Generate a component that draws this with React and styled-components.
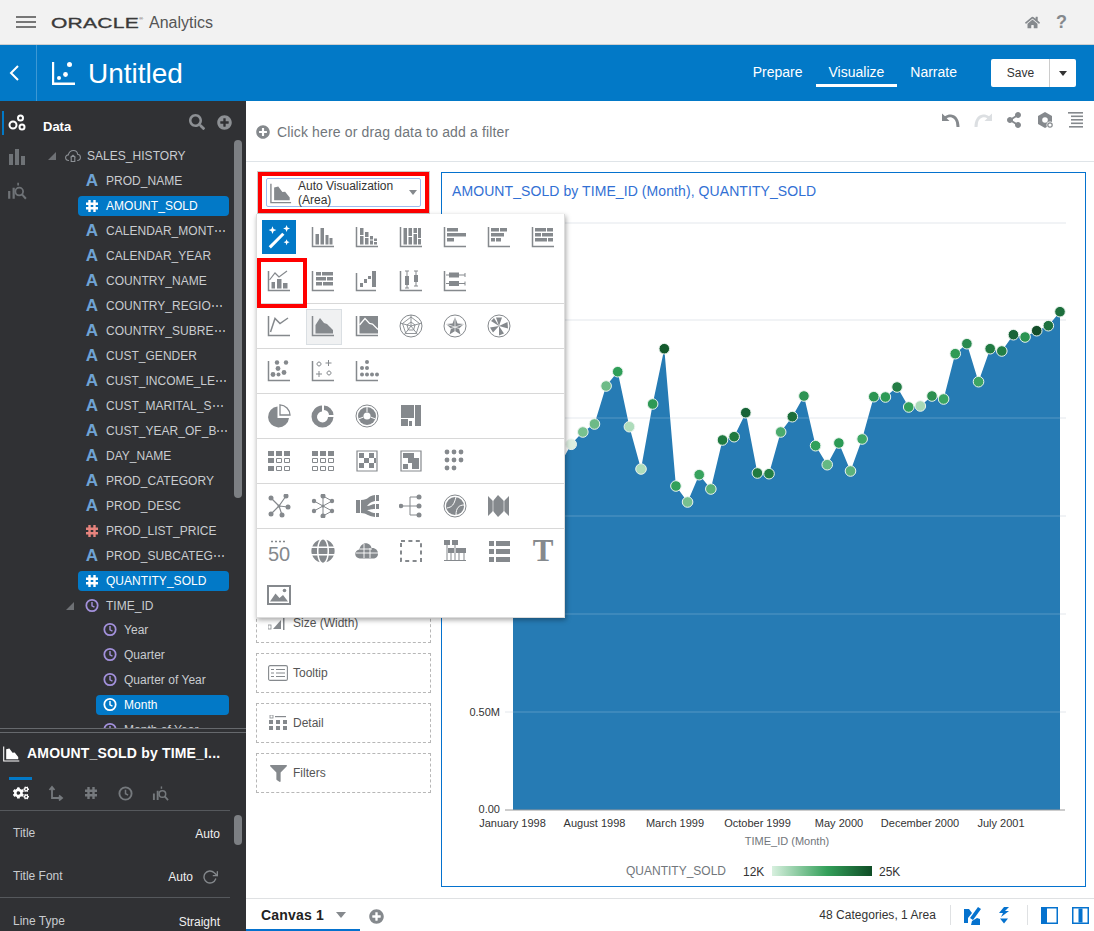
import React from 'react';
import styled, { createGlobalStyle } from 'styled-components';
import { FaHome, FaSearch, FaPlusCircle, FaShareAlt, FaFilter, FaCogs, FaGlobe } from 'react-icons/fa';
import { FiRotateCw } from 'react-icons/fi';

const Global = createGlobalStyle`
  html, body { margin: 0; padding: 0; background: #fff; overflow: hidden; }
  body { font-family: "Liberation Sans", Arial, sans-serif; }
  * { box-sizing: border-box; }
`;

const G = '#85898d';

const Page = styled.div`display: flex; flex-direction: column; width: 1094px; height: 931px; overflow: hidden;`;

/* ---------- top bars ---------- */
const TopBar = styled.header`
  height: 45px; flex: none; display: flex; align-items: center; padding: 0 27px 0 16px;
  background: #f2f2f2; border-bottom: 1px solid #cfcfcf;
`;
const Burger = styled.span`
  width: 20px; height: 12px; margin-right: 15px; display: block;
  border-top: 2px solid #777; border-bottom: 2px solid #777; position: relative;
  &::after { content: ''; position: absolute; left: 0; right: 0; top: 3px; height: 2px; background: #777; }
`;
const Logo = styled.span`
  font-size: 15px; letter-spacing: .2px; color: #3a3a3a; -webkit-text-stroke: .35px #3a3a3a;
  display: inline-block; width: 92px; transform: scaleX(1.4); transform-origin: left center; white-space: nowrap;
  sup { font-size: 4px; -webkit-text-stroke: 0; vertical-align: 8px; }
`;
const Product = styled.span`font-size: 16px; color: #555; margin-left: 6px; margin-top: 1px;`;
const TopIcons = styled.div`margin-left: auto; display: flex; align-items: center; gap: 16px; color: ${G};`;
const Help = styled.span`font-size: 18px; font-weight: 700; color: ${G}; line-height: 1;`;

const TitleBar = styled.div`height: 56px; flex: none; display: flex; align-items: center; background: #0279c7; color: #fff;`;
const Back = styled.div`
  width: 37px; height: 100%; margin-right: 15px; display: flex; align-items: center; justify-content: center; padding-right: 8px;
  border-right: 1px solid #3d98d4;
`;
const DocTitle = styled.h1`margin: 2px 0 0 12px; font-size: 28px; font-weight: 400; line-height: 56px;`;
const Nav = styled.nav`margin-left: auto; display: flex; height: 100%; align-items: stretch; margin-right: 21px;`;
const NavItem = styled.a`
  display: flex; align-items: center; font-size: 14px; color: #fff; padding: 1px 13px 0; margin-bottom: 14px; margin-top: 14px;
  border-bottom: 3px solid ${p => (p.$on ? '#fff' : 'transparent')};
`;
const SaveGroup = styled.div`
  display: flex; width: 85px; height: 28px; margin-right: 18px; background: #fff; border-radius: 2px; color: #333; font-size: 12px;
`;
const SaveBtn = styled.span`width: 59px; padding-left: 1px; display: flex; align-items: center; justify-content: center; border-right: 1px solid #ccc;`;
const SaveArrow = styled.span`
  flex: 1; display: flex; align-items: center; justify-content: center;
  &::after { content: ''; border: 4px solid transparent; border-top: 5px solid #333; margin-top: 4px; }
`;

/* ---------- body ---------- */
const Body = styled.div`flex: 1; display: flex; min-height: 0;`;
const Sidebar = styled.aside`width: 246px; flex: none; display: flex; flex-direction: column; background: #303134; color: #c9ccd0; font-size: 12px;`;
const DataPane = styled.section`height: 627px; flex: none; display: flex; overflow: hidden; position: relative;`;
const Rail = styled.div`width: 36px; flex: none; display: flex; flex-direction: column; align-items: center; padding-top: 5px;`;
const RailItem = styled.div`
  width: 36px; height: 34px; display: flex; align-items: center; justify-content: center; margin-left: -3px;
  position: relative; color: ${p => (p.$on ? '#fff' : '#6f7377')};
  ${p => p.$on && `&::before { content: ''; position: absolute; left: 3px; top: 5px; width: 2px; height: 24px; background: #0279c7; }`}
`;
const TreeWrap = styled.div`flex: 1; min-width: 0;`;
const DataHead = styled.div`height: 42px; display: flex; align-items: center; padding: 0 14px 0 7px; color: #fff;`;
const DataLabel = styled.strong`font-size: 13px; margin-right: auto; margin-top: 8px;`;
const HeadIcons = styled.div`display: flex; gap: 12px; color: #8d9094; align-items: center;`;
const Row = styled.div`height: 25px; display: flex; align-items: center;`;
const Pill = styled.div`
  height: 20px; width: ${p => 193 - p.$indent}px; margin-left: ${p => p.$indent}px; display: flex; align-items: center;
  padding-left: ${p => p.$pad}px; border-radius: 4px; white-space: nowrap;
  background: ${p => (p.$on ? '#0279c7' : 'transparent')}; color: ${p => (p.$on ? '#fff' : 'inherit')};
`;
const Twisty = styled.i`
  width: 0; height: 0; display: block; border-style: solid; border-width: 0 0 8px 8px;
  border-color: transparent transparent #6e7175 transparent; margin-right: ${p => p.$gap}px;
`;
const Label = styled.span`margin-left: ${p => p.$gap ?? 7}px; letter-spacing: .03px;`;
const Kids = styled.div`margin-top: -1px;`;
const Scroll = styled.div`
  position: absolute; left: 234px; top: ${p => p.$top}px; width: 8px; height: ${p => p.$h}px; background: #7c7f83; border-radius: 4px;
`;
const Glyph = styled.span`
  width: 14px; height: 14px; display: flex; align-items: center; justify-content: center; font-size: 17px; font-weight: 700; flex: none;
  color: ${p => p.$c};
`;
const Splitter = styled.div`height: 5px; flex: none; border-top: 1px solid #66696d; border-bottom: 1px solid #66696d;`;
const PropsPane = styled.section`flex: 1; position: relative; overflow: hidden;`;
const PropsTitle = styled.div`height: 40px; display: flex; align-items: center; padding-left: 3px; gap: 7px; color: #fff; font-weight: 700; font-size: 14px; letter-spacing: .18px;`;
const Tabs = styled.div`height: 38px; display: flex; padding-left: 9px; gap: 12px; border-bottom: 1px solid #55585c; margin-right: 16px;`;
const Tab = styled.div`
  width: 23px; display: flex; align-items: center; justify-content: center; padding-bottom: 4px; color: ${p => (p.$on ? '#fff' : '#75797d')};
  border-top: ${p => (p.$on ? '3px solid #0279c7' : '3px solid transparent')}; margin-top: 4px;
`;
const PropRow = styled.div`
  height: ${p => p.$h}px; display: flex; align-items: center; justify-content: space-between; padding: 0 26px 0 13px;
  ${p => p.$rule && 'border-bottom: 1px solid #55585c; margin-right: 16px; padding-right: 12px;'}
`;
const PropValue = styled.span`color: #f0f0f0; display: flex; align-items: center; gap: 9px; margin-top: 2px;`;

/* ---------- main ---------- */
const Main = styled.main`flex: 1; min-width: 0; display: flex; flex-direction: column;`;
const FilterBar = styled.div`
  height: 61px; flex: none; display: flex; padding: 9px 10px 0 10px; border-bottom: 1px solid #dfe4e8; position: relative;
`;
const FilterHint = styled.div`display: flex; align-items: center; gap: 7px; font-size: 14px; letter-spacing: .15px; color: #71767b; height: 44px;`;
const Tools = styled.div`margin-left: auto; display: flex; gap: 14px; height: 20px; align-items: center; color: ${G};`;
const Workspace = styled.div`flex: 1; display: flex; min-height: 0; position: relative;`;
const Column = styled.div`width: 195px; flex: none; padding: 10px 10px 0;`;
const Selector = styled.div`
  height: 41px; border: 4px solid #f00; margin: 0 2px; padding: 2px 4px; box-shadow: 0 0 0 1px #ccc;
`;
const SelectBox = styled.div`
  height: 29px; display: flex; align-items: center; padding: 0 3px 0 3px; border: 1px solid #9dbcf0; border-radius: 2px;
  font-size: 12px; line-height: 14px; color: #333;
`;
const SelectText = styled.span`margin-left: 6px; flex: 1;`;
const Caret = styled.i`border: 4px solid transparent; border-top: 5px solid ${G}; margin-top: 4px;`;
const Zones = styled.div`margin-top: 390px; display: flex; flex-direction: column; gap: 10px;`;
const Zone = styled.div`
  height: 40px; border: 1px dashed #b7b7b7; display: flex; align-items: center; gap: 5px; padding-left: 11px; font-size: 12px; color: #555;
`;
const ZoneIcon = styled.span`width: 20px; display: flex; justify-content: center; align-items: center; flex: none;`;
const Card = styled.div`flex: 1; margin: 10px 8px 11px 0; border: 1px solid #0572ce; position: relative; min-width: 0;`;
const CardTitle = styled.div`position: absolute; left: 10px; top: 10px; font-size: 14px; letter-spacing: .08px; color: #3270d4; white-space: nowrap;`;
const ChartSvg = styled.svg`display: block; width: 100%; height: 100%;`;

const Popup = styled.div`
  position: absolute; left: 10px; top: 52px; width: 309px; background: #fff; border: 1px solid #dcdcdc; border-top-width: 0;
  box-shadow: 1px 2px 5px rgba(0,0,0,.35); z-index: 5;
`;
const Group = styled.div`display: grid; grid-template-columns: repeat(7, 44px); grid-auto-rows: 44px; ${p => (p.$first ? 'padding-top: 1px;' : 'border-top: 1px solid #d8d8d8;')}`;
const Cell = styled.div`
  display: flex; align-items: center; justify-content: center; position: relative;
  ${p => p.$active && `&::before { content: ''; position: absolute; left: 5px; top: 5px; width: 34px; height: 34px; background: #0279c7; }`}
  ${p => p.$sel && `&::before { content: ''; position: absolute; left: 5px; top: 5px; width: 34px; height: 34px; background: #f0f1f2; border: 1px solid #dadfe3; }`}
  ${p => p.$mark && `&::after { content: ''; position: absolute; left: 0; top: -1px; width: 42px; height: 42px; border: 4px solid #f00; }`}
  svg { position: relative; }
`;

const Footer = styled.footer`height: 33px; flex: none; border-top: 1px solid #dfe1e3; display: flex; align-items: stretch; padding-right: 5px;`;
const CanvasTab = styled.div`
  width: 114px; padding: 2px 0 0 15px; display: flex; align-items: center; font-size: 14px; font-weight: 700; color: #222;
  border-bottom: 2px solid #0572ce; letter-spacing: .2px;
`;
const TabCaret = styled.i`border: 5px solid transparent; border-top: 6px solid ${G}; margin: 5px 0 0 12px;`;
const AddCanvas = styled.span`display: flex; align-items: center; margin-left: 9px; padding-top: 2px; color: ${G};`;
const Status = styled.div`margin-left: auto; display: flex; align-items: center; font-size: 12px; letter-spacing: .03px; color: #333;`;
const Sep = styled.span`width: 1px; height: 20px; background: #dfe1e3; margin: 0 ${p => p.$r}px 0 ${p => p.$l}px;`;
const FootIcons = styled.span`display: flex; align-items: center; gap: ${p => p.$gap}px; color: #0572ce;`;

/* ---------- viz icons ---------- */
const Axis = () => <path d="M1.5 2v19.500H23" fill="none" stroke={G} strokeWidth="1.500" />;
const R = ({ a }) => a.map(([x, y, w, h], i) => <rect key={i} x={x} y={y} width={w} height={h} />);
const C = ({ a, r = 2 }) => a.map(([x, y, q], i) => <circle key={i} cx={x} cy={y} r={q || r} />);
const V = ({ children, size = 24 }) => <svg width={size} height={size} viewBox="0 0 24 24" fill={G}>{children}</svg>;
const Ln = ({ d, w = 1.2 }) => <path d={d} fill="none" stroke={G} strokeWidth={w} />;
const Wl = ({ d, w = 1 }) => <path d={d} fill="none" stroke="#fff" strokeWidth={w} />;
const Ring = () => <circle cx="12" cy="12" r="11" fill="none" stroke={G} strokeWidth="1" />;

const icons = {
  wand: <svg width="26" height="26" viewBox="0 0 24 24" fill="#fff"><path d="M2.500 20.500 15 8l2 2L4.500 22.500z" /><path d="M6 2l1 2.600 2.600 1-2.600 1-1 2.600-1-2.600L2.400 5.600l2.600-1zM19 1l.9 2.300 2.300.9-2.300.9-.9 2.300-.9-2.300-2.300-.9 2.300-.9zM19 14l.8 2 2 .8-2 .8-.8 2-.8-2-2-.8 2-.8z" /></svg>,
  bars: <V><Axis /><R a={[[4.500, 9, 3.500, 10.500], [9.500, 3, 3.500, 16.500], [14.500, 10, 3, 9.500], [18.500, 13, 3, 6.500]]} /></V>,
  stack: <V><Axis /><R a={[[5, 3, 3.500, 7], [5, 11, 3.500, 8.500], [10, 7, 3.500, 5], [10, 13, 3.500, 6.500], [15, 11, 3, 3.500], [15, 15.500, 3, 4], [19, 13.500, 3, 2.500], [19, 17, 3, 2.500]]} /></V>,
  full: <V><Axis /><R a={[[4.500, 3, 3.500, 16.500], [9.500, 3, 3.500, 8], [9.500, 12, 3.500, 7.500], [14.500, 3, 3.500, 5], [14.500, 9, 3.500, 10.500], [19, 3, 3, 10], [19, 14, 3, 5.500]]} /></V>,
  hbar: <V><Axis /><R a={[[4, 3, 11, 3.500], [4, 8, 19, 3.500], [4, 13, 7, 3.500]]} /></V>,
  hstack: <V><Axis /><R a={[[4, 3, 8, 3.500], [13, 3, 7, 3.500], [4, 8, 13, 3.500], [4, 13, 4, 3.500], [9, 13, 5, 3.500]]} /></V>,
  hfull: <V><Axis /><R a={[[4, 3, 11, 3.500], [16, 3, 6, 3.500], [4, 8, 6, 3.500], [11, 8, 11, 3.500], [4, 13, 12, 3.500], [17, 13, 5, 3.500]]} /></V>,
  combo: <V><Axis /><R a={[[4.500, 13, 3.500, 6.500], [10, 10, 4.500, 9.500], [16, 14, 4.500, 5.500]]} /><Ln d="M2.500 11 8 4l4 4 8-6" /></V>,
  pivot: <V><Axis /><R a={[[5, 3, 5, 3.500], [11, 3, 11, 3.500], [5, 8, 10, 3.500], [16, 8, 6, 3.500], [5, 13, 6, 3.500], [12, 13, 10, 3.500]]} /></V>,
  water: <V><Ln d="M1.500 4v17.500H21" w={1.500} /><R a={[[5, 14, 3, 4], [9, 10, 3, 4], [13, 7, 3, 3], [17, 2, 4, 16]]} /></V>,
  box: <V><Axis /><R a={[[6, 7, 4, 9], [15, 6, 4, 7]]} /><Ln d="M8 2v17M6 2h4M6 19h4M17 2v15M15 2h4M15 17h4" w={1} /></V>,
  hbox: <V><Axis /><R a={[[6, 3.500, 10, 5], [6, 12, 10, 5]]} /><Ln d="M3 6h19M3 14.500h19M22 4v4M22 12.500v4" w={1} /></V>,
  line: <V><Axis /><Ln d="M3.500 18 8 4.500l5 5L21 4" w={1.500} /></V>,
  area: <V><Axis /><path d="M4.500 19.500V11L9 4l4 5 3 1 3 3 3 3v3.500z" /></V>,
  area2: <V><Axis /><path d="M4.500 2H23v17.500H4.500z" /><Wl d="M4.500 11 10 4.500l4.500 5 3 .5 5.500 5.500" w={1.300} /></V>,
  radar: <V><Ring /><Ln d="M12 3l8.500 6.500-3.300 10H6.800L3.500 9.500zM12 8l4 3-1.500 5h-5L8 11zM12 1v11M1 9l11 3M23 9l-11 3M5 21l7-9M19 21l-7-9" w={.9} /></V>,
  radar2: <V><Ring /><path d="M12 3l2.500 6.500 6.500.5-5 4.500 1.500 6L12 17l-5.500 3.500L8 14.500 3 10l6.500-.5z" /><Wl d="M12 3v14M3 10l13 4.500M21 10 8 14.500" w={.7} /></V>,
  polar: <V><Ring /><path d="M12 12 9 3.500h6zM12 12l8.500-4 .5 6.500zM12 12l5 7.500-5 2zM12 12l-6 6.500-3-5zM12 12 4 7l3-3z" /></V>,
  scatter: <V><Axis /><C a={[[6, 15.500, 2.400], [11, 9.500, 2.400], [10, 3.500, 2.200], [19, 3.500, 2.200], [17, 13.500, 2.400], [11.500, 15.500, 2]]} /></V>,
  scatter2: <V><Axis /><Ln d="M8 3a2 2 0 1 0 .01 0M18 12a2 2 0 1 0 .01 0M17.500 1v6M14.500 4h6M8 12v6M5 15h6" w={1} /></V>,
  dot: <V><Axis /><C a={[[12, 3], [7, 9], [12, 9], [7, 15.500], [12, 15.500], [17, 15.500], [22, 15.500]]} r={2} /></V>,
  pie: <V><path d="M10.500 2.500A10.500 10.500 0 1 0 22 14H10.500z" /><path d="M13 .8a10.500 10.500 0 0 1 10 10.200H13z" fill="none" stroke={G} strokeWidth="1.300" /></V>,
  donut: <V><path fillRule="evenodd" d="M11 1.500A11 11 0 1 0 22.500 13H17a5.500 5.500 0 1 1-6-5.500z" /><path d="M13 1.500A10 10 0 0 1 22.500 11H18a5.500 5.500 0 0 0-5-5z" /></V>,
  sun: <V><Ring /><circle cx="12" cy="12" r="9" /><circle cx="12" cy="12" r="3.500" fill="#fff" /><Wl d="M12 3v5M3.500 15l5-2M20.500 15l-5-2" /></V>,
  tree: <V><R a={[[2, 1, 13, 13], [16, 1, 6, 21], [2, 15, 7, 7], [10, 17, 3, 5]]} /></V>,
  tab1: <V><R a={[[1, 2, 6, 5], [9, 2, 6, 5], [17, 2, 6, 5], [1, 9, 6, 5], [1, 17, 6, 5]]} /><Ln d="M9.500 9.500h5v4h-5zM17.500 9.500h5v4h-5zM9.500 17.500h5v4h-5zM17.500 17.500h5v4h-5z" w={1} /></V>,
  tab2: <V><R a={[[1, 2, 6, 5], [9, 2, 6, 5], [17, 2, 6, 5]]} /><Ln d="M1.500 9.500h5v4h-5zM9.500 9.500h5v4h-5zM17.500 9.500h5v4h-5zM1.500 17.500h5v4h-5zM9.500 17.500h5v4h-5zM17.500 17.500h5v4h-5z" w={1} /></V>,
  heat1: <V><Ln d="M2 2h20v20H2z" /><R a={[[4, 4, 5, 5], [14, 4, 5, 5], [9, 9, 5, 5], [4, 14, 5, 5], [14, 14, 5, 5], [19, 9, 2, 5]]} /></V>,
  heat2: <V><Ln d="M2 2h20v20H2z" /><R a={[[4, 4, 11, 5], [9, 9, 6, 5], [15, 9, 5, 5], [4, 15, 5, 5], [13, 14, 7, 6]]} /></V>,
  tag: <V><C a={[[4, 3], [11, 3], [18, 3], [4, 11], [11, 11], [18, 11], [4, 19], [11, 19]]} r={2.400} /></V>,
  net: <V><C a={[[4, 4, 2.500], [19, 2, 2.500], [21, 13, 2.500], [4, 20, 2.500], [15, 21, 2.500]]} /><circle cx="12" cy="12" r="1.500" /><Ln d="M4 4l8 8M19 2l-7 10M21 13l-9-1M4 20l8-8M15 21l-3-9" /></V>,
  net2: <V><C a={[[12, 2, 2.500], [3, 7, 2.200], [3, 17, 2.200], [12, 22, 2.500], [21, 7, 2.200], [21, 17, 2.200]]} /><circle cx="12" cy="12" r="1.600" /><Ln d="M12 2v20M3 7l18 10M3 17 21 7M12 2l9 5M21 17l-9 5" w={1} /></V>,
  sankey: <V><R a={[[1, 6, 4, 13], [21, 1, 3, 6], [21, 10, 3, 5], [21, 19, 3, 4]]} /><path d="M6 6c8 0 6-4 14-5v6c-5 1-6 3-8 5 3 0 5-2 8-2v5c-5 0-5 1-8 1 4 2 5 3 8 3v4c-8-1-8-4-14-4z" /></V>,
  htree: <V><C a={[[2, 12, 2.300], [20, 3, 2.500], [20, 12, 2.500], [20, 21, 2.500]]} /><Ln d="M2 12h18M11 3v18M11 3h9M11 21h9" w={1} /></V>,
  chord: <V><Ring /><circle cx="12" cy="12" r="9" /><Wl d="M4 14c5-1 7-3 9-11M21 11c-5 0-8 3-8 10" /></V>,
  para: <V><path d="M1 2l5 5 5-6 6 6 5-5v20l-5-5-6 6-5-6-5 5z" /><Wl d="M6 2v20M17 2v20" w={.6} /></V>,
  num: <svg width="24" height="26" viewBox="0 0 24 26"><text x="12" y="23" textAnchor="middle" fontSize="20" fontFamily="Liberation Sans" fill={G}>50</text><path d="M4 3.500h16" stroke={G} strokeWidth="1.500" strokeDasharray="2 2" /></svg>,
  globe: <FaGlobe size={24} color={G} />,
  cloud: <V><path d="M5 19.500a4.500 4.500 0 0 1-.5-9C5 6 9 3.500 12.500 4.500c2.500.7 3.500 2.500 4 4.500 3.500-.5 6.500 2 6.500 5.500s-2 5-5 5z" /><Wl d="M1 14h22M9 5v14M15 9v10M5 10h12" w={.9} /></V>,
  blank: <V><path d="M2 2h20v20H2z" fill="none" stroke={G} strokeWidth="2" strokeDasharray="4 3.400" /></V>,
  trellis: <V><R a={[[1, 1, 6, 5], [9, 1, 6, 5], [5, 9, 6, 5], [13, 9, 6, 5], [18, 9, 5, 5]]} /><Ln d="M4 6v16M12 6v16M8 14v8M16 14v8M21 14v8M1 21.500h22" w={1} /></V>,
  list: <V><R a={[[2, 2, 5, 5], [9, 2, 14, 5], [2, 10, 5, 5], [9, 10, 14, 5], [2, 18, 5, 5], [9, 18, 14, 5]]} /></V>,
  text: <svg width="26" height="28" viewBox="0 0 26 28"><text x="13" y="24" textAnchor="middle" fontSize="31" fontWeight="700" fontFamily="Liberation Serif" fill={G}>T</text></svg>,
  image: <V><path fillRule="evenodd" d="M0 2h24v20H0zM2 4v16h20V4z" /><path d="M3 18.500l5.500-8 4 4.500 3.500-3 5 6.500z" /><circle cx="17.500" cy="7.500" r="1.800" /></V>,
};

const groups = [
  ['wand', 'bars', 'stack', 'full', 'hbar', 'hstack', 'hfull', 'combo', 'pivot', 'water', 'box', 'hbox'],
  ['line', 'area', 'area2', 'radar', 'radar2', 'polar'],
  ['scatter', 'scatter2', 'dot'],
  ['pie', 'donut', 'sun', 'tree'],
  ['tab1', 'tab2', 'heat1', 'heat2', 'tag'],
  ['net', 'net2', 'sankey', 'htree', 'chord', 'para'],
  ['num', 'globe', 'cloud', 'blank', 'trellis', 'list', 'text', 'image'],
];

/* ---------- small icons ---------- */
const Clock = ({ c = '#a391dc' }) => (
  <svg width="15" height="15" viewBox="0 0 16 16" fill="none" stroke={c} strokeWidth="2"><circle cx="8" cy="8" r="6.500" /><path d="M8 4v4.300l2.800 1.500" strokeWidth="1.600" /></svg>
);
const Hash = ({ c }) => (
  <svg width="14" height="14" viewBox="0 0 14 14" fill="none" stroke={c} strokeWidth="2.400"><path d="M4.500 1v12M9.500 1v12M1 4.700h12M1 9.300h12" /></svg>
);
const LetterA = () => <Glyph $c="#6fa3d4">A</Glyph>;
const DataIcon = () => (
  <svg width="18" height="18" viewBox="0 0 18 18" fill="none" stroke="#fff" strokeWidth="2"><circle cx="12.500" cy="4" r="2.500" /><circle cx="5" cy="11" r="3.500" /><circle cx="14" cy="13" r="2.500" /></svg>
);
const BarsIcon = ({ s = 18 }) => (
  <svg width={s} height={s} viewBox="0 0 18 18" fill="currentColor"><rect x="1" y="6" width="4" height="11" /><rect x="7" y="1" width="4" height="16" /><rect x="13" y="8" width="4" height="9" /></svg>
);
const InsightIcon = ({ s = 20 }) => (
  <svg width={s} height={s} viewBox="0 0 18 18" fill="none" stroke="currentColor"><path d="M1 9h2v7H1zM5 6h2v10H5z" fill="currentColor" stroke="none" /><circle cx="11" cy="9.500" r="3.500" strokeWidth="1.600" /><path d="M13.500 12l3.500 4" strokeWidth="1.800" /><path d="M10 1.500v2.500" strokeWidth="1.500" /></svg>
);
const CloudIcon = () => (
  <svg width="16" height="14" viewBox="0 0 16 14" fill="none" stroke="#8c9095" strokeWidth="1.100"><path d="M4 11.500C1.500 11.500.6 10 .6 8.500S2 5.800 3.300 5.900C4 3 6 1.500 8.500 1.500c2.300 0 3.800 1.500 4.100 3.700 1.600.2 2.800 1.500 2.800 3.100 0 1.800-1.200 3.200-3.200 3.200" /><path d="M5.500 8.500 8 6.300l2.500 2.200M6.200 8v4.500h3.600V8" /></svg>
);
const ChartLogo = ({ s = 24 }) => (
  <svg width={s} height={s} viewBox="0 0 24 24" fill="#fff"><path d="M0 1h2.200v20.600H23V24H0z" /><circle cx="7" cy="17" r="2" /><circle cx="13.500" cy="13.500" r="2.400" /><circle cx="17.500" cy="3.500" r="2.500" /></svg>
);
const AreaSmall = ({ c = G, s = 22 }) => (
  <svg width={s} height={s} viewBox="0 0 24 24" fill={c}><path d="M1 2v20.500h22" fill="none" stroke={c} strokeWidth="1.500" /><path d="M4.500 20V6L9 5l4.500 6 3-.5 5 6.500v3z" /></svg>
);
const TooltipIcon = () => (
  <svg width="20" height="16" viewBox="0 0 20 16" fill="none" stroke="#85898d" strokeWidth="1.100"><rect x=".6" y=".6" width="18.800" height="14.800" rx="1.500" /><path d="M3 4.500h3M8 4.500h9M3 8h3M8 8h9M3 11.500h3M8 11.500h9" /></svg>
);
const DetailIcon = () => (
  <svg width="18" height="16" viewBox="0 0 18 16" fill="#85898d"><rect x="1" y="0" width="3" height="3" fill="none" stroke="#85898d" strokeWidth=".8" /><rect x="6" y="1" width="11" height="1.200" /><rect y="5" width="4" height="4" /><rect x="7" y="5" width="4" height="4" /><rect x="14" y="5" width="4" height="4" /><rect y="11" width="4" height="4" /><rect x="7" y="11" width="4" height="4" /><rect x="14" y="11" width="4" height="4" /></svg>
);
const SizeIcon = () => (
  <svg width="20" height="14" viewBox="0 0 20 14" fill="#85898d"><path d="M5 13 13 4v9z" /><rect x="15" y="0" width="1.500" height="14" /><rect x="0" y="9" width="3" height="4" fill="none" stroke="#85898d" strokeWidth=".8" /></svg>
);
const UndoIcon = () => (
  <svg width="18" height="16" viewBox="0 0 18 16" fill={G}><path d="M0 1.500v7.500h7.500L4.700 6.200C7.500 4.300 12.500 5 14 10.500l.5 4.500h3c0-6-2.500-12-8.500-12.500-2-.2-4 .5-6 1.700z" /></svg>
);
const RedoIcon = () => (
  <svg width="18" height="16" viewBox="0 0 18 16" fill="#dcdfe2"><path d="M18 1.500v7.500h-7.500l2.800-2.800C10.500 4.300 5.500 5 4 10.500L3.500 15h-3c0-6 2.500-12 8.500-12.500 2-.2 4 .5 6 1.700z" /></svg>
);
const GearHex = () => (
  <svg width="18" height="18" viewBox="0 0 18 18" fill={G}><path d="M9 1l7 4v8l-7 4-7-4V5z" /><circle cx="9" cy="9" r="2.800" fill="#fff" /><circle cx="14" cy="14" r="3.500" fill="#fff" /><circle cx="14" cy="14" r="2.200" fill="none" stroke={G} strokeWidth="1.200" /></svg>
);
const MenuLines = () => (
  <svg width="16" height="16" viewBox="0 0 16 16" fill={G}><rect y="0" width="15" height="1.600" /><rect x="3" y="3.500" width="12" height="1.600" /><rect x="3" y="7" width="12" height="1.600" /><rect x="3" y="10.500" width="12" height="1.600" /><rect x="1" y="14" width="14" height="1.600" /></svg>
);
const Brush = () => (
  <svg width="18" height="19" viewBox="0 0 18 19" fill="#0572ce"><path d="M0 3h5l3 4-4 5v5H0z" /><path d="M6 12 14 1l3 2-8 11z" /><path d="M8 15l5-3 3 1v6H7z" /></svg>
);
const Bolt = () => (
  <svg width="12" height="18" viewBox="0 0 12 18" fill="#0572ce"><path d="M6 1h5L7 5h4L3 11l2-4H1zM2 12.500h8L6 17.500z" /></svg>
);
const PanelLeft = () => (
  <svg width="17" height="17" viewBox="0 0 17 17">
    <rect width="17" height="17" fill="#0572ce" /><rect x="6" y="1.500" width="9.500" height="14" fill="#fff" />
  </svg>
);
const PanelMid = () => (
  <svg width="17" height="17" viewBox="0 0 17 17">
    <rect width="17" height="17" fill="#0572ce" /><rect x="1.500" y="1.500" width="14" height="14" fill="#fff" /><rect x="6.500" y="1.500" width="4" height="14" fill="#0572ce" />
  </svg>
);

/* ---------- data ---------- */
const tree = [
  ['a', 'PROD_NAME'], ['h', 'AMOUNT_SOLD', 1], ['a', 'CALENDAR_MONT\u22EF'], ['a', 'CALENDAR_YEAR'], ['a', 'COUNTRY_NAME'],
  ['a', 'COUNTRY_REGIO\u22EF'], ['a', 'COUNTRY_SUBRE\u22EF'], ['a', 'CUST_GENDER'], ['a', 'CUST_INCOME_LE\u22EF'], ['a', 'CUST_MARITAL_S\u22EF'],
  ['a', 'CUST_YEAR_OF_B\u22EF'], ['a', 'DAY_NAME'], ['a', 'PROD_CATEGORY'], ['a', 'PROD_DESC'], ['p', 'PROD_LIST_PRICE'],
  ['a', 'PROD_SUBCATEG\u22EF'], ['h', 'QUANTITY_SOLD', 1],
];
const timeKids = [['Year'], ['Quarter'], ['Quarter of Year'], ['Month', 1], ['Month of Year']];

const ys = [455, 452, 458, 462, 465, 444.3, 432, 424, 386, 371.7, 426.7, 469, 404, 348.7, 486, 502, 474.7, 489, 440, 436.7, 412.7, 473, 473.7, 432, 416.7, 396, 445.7, 464.7, 443, 471, 439, 396.7, 397, 387, 407, 406, 396, 399, 353.7, 343.7, 381.7, 348.7, 351, 334.7, 337, 330.7, 325.7, 311.7];
const colors = { 5: '#dbeee0', 6: '#78c18f', 7: '#6dba87', 8: '#6dbb87', 9: '#2f9e58', 10: '#aedcbb', 11: '#aeddbb', 12: '#2e9956', 13: '#145a2d', 14: '#32a05a', 15: '#77c08f', 16: '#38a35e', 17: '#59b178', 18: '#1f7a40', 19: '#1f7a40', 20: '#176336', 21: '#217a40', 22: '#237f45', 23: '#4bab6d', 24: '#1c6f3b', 25: '#2c9453', 26: '#2fa05a', 27: '#65b884', 28: '#2c9a55', 29: '#5cb27c', 30: '#3fa866', 31: '#2c9553', 32: '#2e9a56', 33: '#237d45', 34: '#33a05b', 35: '#a8d9b6', 36: '#2d8f50', 37: '#3aa562', 38: '#2f9a55', 39: '#2a8a4f', 40: '#3da463', 41: '#217a42', 42: '#237e45', 43: '#1a6538', 44: '#2b9552', 45: '#134d2a', 46: '#1e7240', 47: '#1d6e3c' };
const px = i => 513 + i * 11.638;
const areaPath = `M513 810 ${ys.map((y, i) => `L${px(i).toFixed(1)} ${y}`).join(' ')} L1060 810 Z`;
const xLabels = [['January 1998', 512.5], ['August 1998', 594.5], ['March 1999', 675], ['October 1999', 757.5], ['May 2000', 839], ['December 2000', 920], ['July 2001', 1001]];

const Chart = () => (
  <ChartSvg viewBox="442 173 643 713" fontFamily="Liberation Sans">
    <defs>
      <linearGradient id="legend"><stop offset="0" stopColor="#d8f0df" /><stop offset=".55" stopColor="#34a05a" /><stop offset="1" stopColor="#0f4d26" /></linearGradient>
    </defs>
    {[223, 320, 418, 516, 614, 712].map(y => <line key={y} x1="505" x2="1066" y1={y} y2={y} stroke="#e3e7ec" />)}
    <path d={areaPath} fill="#267bb4" />
    {[418, 516, 614, 712].map(y => <line key={y} x1="513" x2="1060" y1={y} y2={y} stroke="#fff" strokeOpacity=".22" />)}
    <line x1="505" x2="1065" y1="810" y2="810" stroke="#9a9a9a" />
    {ys.map((y, i) => colors[i] && <circle key={i} cx={px(i)} cy={y} r="5.300" fill={colors[i]} stroke="#eaf3ee" strokeWidth="1" />)}
    <g fontSize="11" fill="#333" textAnchor="end">
      <text x="500" y="716">0.50M</text>
      <text x="500" y="813">0.00</text>
    </g>
    <g fontSize="11" fill="#333" textAnchor="middle">
      {xLabels.map(([t, x]) => <text key={t} x={x} y="827">{t}</text>)}
    </g>
    <text x="787" y="845" fontSize="11" fill="#71767b" textAnchor="middle">TIME_ID (Month)</text>
    <text x="626" y="875" fontSize="12" fill="#71767b">QUANTITY_SOLD</text>
    <text x="743" y="876" fontSize="12" fill="#333">12K</text>
    <rect x="772" y="866" width="100" height="10" fill="url(#legend)" />
    <text x="879" y="876" fontSize="12" fill="#333">25K</text>
  </ChartSvg>
);

export default function App() {
  return (
    <Page>
      <Global />
      <TopBar>
        <Burger />
        <Logo>ORACLE<sup>®</sup></Logo>
        <Product>Analytics</Product>
        <TopIcons>
          <FaHome size={15} />
          <Help>?</Help>
        </TopIcons>
      </TopBar>

      <TitleBar>
        <Back>
          <svg width="12" height="18" viewBox="0 0 12 18" fill="none" stroke="#fff" strokeWidth="2"><path d="M10 2 3 9l7 7" /></svg>
        </Back>
        <ChartLogo />
        <DocTitle>Untitled</DocTitle>
        <Nav>
          <NavItem>Prepare</NavItem>
          <NavItem $on>Visualize</NavItem>
          <NavItem>Narrate</NavItem>
        </Nav>
        <SaveGroup>
          <SaveBtn>Save</SaveBtn>
          <SaveArrow />
        </SaveGroup>
      </TitleBar>

      <Body>
        <Sidebar>
          <DataPane>
            <Rail>
              <RailItem $on><DataIcon /></RailItem>
              <RailItem><BarsIcon /></RailItem>
              <RailItem><InsightIcon /></RailItem>
            </Rail>
            <TreeWrap>
              <DataHead>
                <DataLabel>Data</DataLabel>
                <HeadIcons>
                  <FaSearch size={16} />
                  <FaPlusCircle size={15} />
                </HeadIcons>
              </DataHead>
              <Row>
                <Pill $indent={12} $pad={0}><Twisty $gap={9} /><CloudIcon /><Label $gap={6}>SALES_HISTORY</Label></Pill>
              </Row>
              {tree.map(([kind, name, on]) => (
                <Row key={name}>
                  <Pill $indent={42} $pad={7} $on={on}>
                    {kind === 'a' && <LetterA />}
                    {kind === 'h' && <Glyph><Hash c="#fff" /></Glyph>}
                    {kind === 'p' && <Glyph><Hash c="#e6837d" /></Glyph>}
                    <Label>{name}</Label>
                  </Pill>
                </Row>
              ))}
              <Row>
                <Pill $indent={30} $pad={0}><Twisty $gap={11} /><Glyph><Clock /></Glyph><Label>TIME_ID</Label></Pill>
              </Row>
              <Kids>
                {timeKids.map(([name, on]) => (
                  <Row key={name}>
                    <Pill $indent={60} $pad={7} $on={on}>
                      <Glyph><Clock c={on ? '#fff' : undefined} /></Glyph>
                      <Label>{name}</Label>
                    </Pill>
                  </Row>
                ))}
              </Kids>
            </TreeWrap>
            <Scroll $top={39} $h={358} />
          </DataPane>
          <Splitter />
          <PropsPane>
            <PropsTitle>
              <AreaSmall c="#fff" s={17} />
              AMOUNT_SOLD by TIME_I...
            </PropsTitle>
            <Tabs>
              <Tab $on><FaCogs size={16} /></Tab>
              <Tab>
                <svg width="16" height="16" viewBox="0 0 16 16" fill="none" stroke="currentColor" strokeWidth="1.800"><path d="M4 3v10h9M1.500 5 4 2l2.500 3M11 10.500l3 2.500-3 2.500" /></svg>
              </Tab>
              <Tab><Hash c="currentColor" /></Tab>
              <Tab><Clock c="currentColor" /></Tab>
              <Tab><InsightIcon s={17} /></Tab>
            </Tabs>
            <PropRow $h={43}><span>Title</span><PropValue>Auto</PropValue></PropRow>
            <PropRow $h={44} $rule>
              <span>Title Font</span>
              <PropValue>Auto <FiRotateCw size={16} color="#85898d" /></PropValue>
            </PropRow>
            <PropRow $h={46}><span>Line Type</span><PropValue>Straight</PropValue></PropRow>
            <Scroll $top={82} $h={30} />
          </PropsPane>
        </Sidebar>

        <Main>
          <FilterBar>
            <FilterHint>
              <FaPlusCircle size={14} color="#85898d" />
              Click here or drag data to add a filter
            </FilterHint>
            <Tools>
              <UndoIcon />
              <RedoIcon />
              <FaShareAlt size={16} />
              <GearHex />
              <MenuLines />
            </Tools>
          </FilterBar>
          <Workspace>
            <Column>
              <Selector>
                <SelectBox>
                  <AreaSmall />
                  <SelectText>Auto Visualization<br />(Area)</SelectText>
                  <Caret />
                </SelectBox>
              </Selector>
              <Zones>
                <Zone><ZoneIcon><SizeIcon /></ZoneIcon>Size (Width)</Zone>
                <Zone><ZoneIcon><TooltipIcon /></ZoneIcon>Tooltip</Zone>
                <Zone><ZoneIcon><DetailIcon /></ZoneIcon>Detail</Zone>
                <Zone><ZoneIcon><FaFilter size={17} color="#85898d" /></ZoneIcon>Filters</Zone>
              </Zones>
            </Column>
            <Card>
              <CardTitle>AMOUNT_SOLD by TIME_ID (Month), QUANTITY_SOLD</CardTitle>
              <Chart />
            </Card>
            <Popup>
              {groups.map((g, i) => (
                <Group key={i} $first={i === 0}>
                  {g.map(name => (
                    <Cell key={name} $active={name === 'wand'} $sel={name === 'area'} $mark={name === 'combo'}>
                      {icons[name]}
                    </Cell>
                  ))}
                </Group>
              ))}
            </Popup>
          </Workspace>
          <Footer>
            <CanvasTab>Canvas 1<TabCaret /></CanvasTab>
            <AddCanvas><FaPlusCircle size={15} /></AddCanvas>
            <Status>
              48 Categories, 1 Area
              <Sep $l={14} $r={13} />
              <FootIcons $gap={16}><Brush /><Bolt /></FootIcons>
              <Sep $l={17} $r={13} />
              <FootIcons $gap={14}><PanelLeft /><PanelMid /></FootIcons>
            </Status>
          </Footer>
        </Main>
      </Body>
    </Page>
  );
}
